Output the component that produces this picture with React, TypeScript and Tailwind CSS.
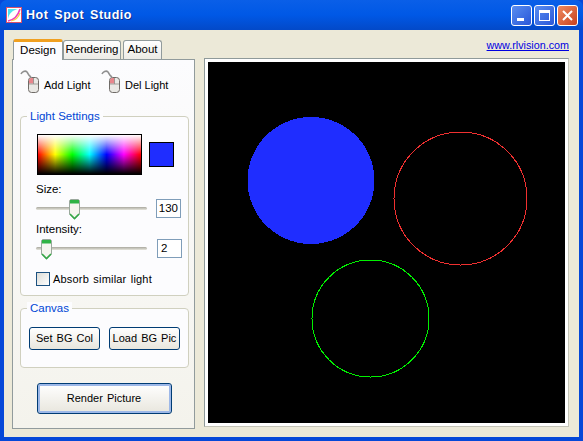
function MouseIcon() {
  return (
    <svg width="20" height="23" viewBox="0 0 20 23" className="shrink-0">
      <path d="M1 4 C2 2 5 0 7 2 C8 3 8 5 11 7" fill="none" stroke="#8f8f8f" strokeWidth="1.6" />
      <rect x="8.5" y="7.5" width="10" height="15" rx="3" fill="#e9e8e4" stroke="#6f6b67" />
      <path d="M9 13 V10 C9 9 10 8 11.5 8 H13.5 V13.5 H9 Z" fill="#e8868c" />
      <path d="M9 14 H18 M13.5 8 V14" stroke="#8f8d89" strokeWidth="0.8" fill="none" />
    </svg>
  );
}

function SliderThumb() {
  return (
    <svg width="11" height="21" viewBox="0 0 11 21">
      <path d="M1.5 .5 H9.5 L10.5 1.5 V15 L5.5 20 L.5 15 V1.5 Z" fill="#f6f5ef" stroke="#9aa89d" />
      <path d="M1 1 H10 V4.5 H1 Z" fill="#2fb344" />
      <path d="M1 15 L5.5 19.5 L10 15" fill="none" stroke="#35a746" strokeWidth="1.6" />
    </svg>
  );
}

function Slider({ thumbLeft }: { thumbLeft: string }) {
  return (
    <div className="relative h-[21px] w-[111px]">
      <div className="mt-[8px] h-[3px] w-full rounded-sm bg-gradient-to-b from-[#a9a89f] to-[#e6e5dc]" />
      <div className={`absolute top-0 ${thumbLeft}`}>
        <SliderThumb />
      </div>
    </div>
  );
}

function GroupBox({ title, className, children }: { title: string; className: string; children: React.ReactNode }) {
  return (
    <div className={`relative rounded-[4px] border border-[#d0d0bf] bg-[#fcfcfe] ${className}`}>
      <span className="absolute -top-[7px] left-[6px] bg-[#fcfcfe] px-[3px] text-[11.5px] leading-[13px] text-[#0046d5]">
        {title}
      </span>
      {children}
    </div>
  );
}

function XpButton({ label, className }: { label: string; className: string }) {
  return (
    <button className={`rounded-[3px] border border-[#003c74] bg-gradient-to-b from-white to-[#e8e6dd] text-[11px] text-black [word-spacing:1px] ${className}`}>
      {label}
    </button>
  );
}

export default function App() {
  return (
    <div className="flex h-[441px] w-[583px] flex-col overflow-hidden bg-[#0648d8] font-['Liberation_Sans',sans-serif]">
      {/* Title bar */}
      <div className="flex h-[30px] shrink-0 items-center rounded-t-[7px] bg-gradient-to-b from-[#0a5fe8] via-[#0058e6] to-[#0349c8] pl-[6px] pr-[5px]">
        <svg width="16" height="16" viewBox="0 0 16 16" className="shrink-0">
          <rect x=".5" y=".5" width="15" height="15" fill="#fff" stroke="#d8506a" />
          <path d="M2 12 C3 6 7 3 12 2 H2 Z" fill="#4fe6ee" />
          <path d="M2 14 C8 13 12 9 14 2" fill="none" stroke="#f040b8" strokeWidth="1.6" />
          <path d="M5 14 C10 13 13 9 14 6" fill="none" stroke="#f8d040" strokeWidth="1.2" />
        </svg>
        <span className="ml-[4px] text-[12.5px] font-bold tracking-[0.5px] text-white [text-shadow:1px_1px_0_#0f2f90] [word-spacing:2px]">
          Hot Spot Studio
        </span>
        <div className="ml-auto flex gap-[2px]">
          <div className="flex h-[21px] w-[21px] items-end rounded-[3px] border border-white bg-gradient-to-br from-[#5a8df0] to-[#2a56d8] pb-[4px] pl-[5px]">
            <div className="h-[3px] w-[7px] bg-white" />
          </div>
          <div className="flex h-[21px] w-[21px] items-center justify-center rounded-[3px] border border-white bg-gradient-to-br from-[#5a8df0] to-[#2a56d8]">
            <div className="h-[11px] w-[11px] border border-t-[3px] border-white" />
          </div>
          <div className="flex h-[21px] w-[21px] items-center justify-center rounded-[3px] border border-white bg-gradient-to-br from-[#ee8a60] to-[#c8401c]">
            <svg width="11" height="11" viewBox="0 0 11 11">
              <path d="M1 1 L10 10 M10 1 L1 10" stroke="#fff" strokeWidth="2" />
            </svg>
          </div>
        </div>
      </div>

      {/* Client area */}
      <div className="mx-[4px] mb-[4px] flex min-h-0 flex-1 bg-[#ece9d8] pl-[8px] pr-[10px]">
        {/* Left tabs */}
        <div className="flex w-[183px] shrink-0 flex-col pt-[8px]">
          <div className="relative z-10 flex h-[21px] items-end pl-[1px] text-[11.5px] text-black">
            <div className="-mb-px flex h-[21px] w-[50px] items-center justify-center rounded-t-[3px] border-x border-[#919b9c] border-t-[3px] border-t-[#f0a020] bg-[#fcfcfe]">
              Design
            </div>
            <div className="flex h-[19px] w-[58px] items-center justify-center rounded-t-[3px] border border-b-0 border-[#919b9c] bg-gradient-to-b from-white to-[#ecebe5]">
              Rendering
            </div>
            <div className="ml-[2px] flex h-[19px] w-[39px] items-center justify-center rounded-t-[3px] border border-b-0 border-[#919b9c] bg-gradient-to-b from-white to-[#ecebe5]">
              About
            </div>
          </div>
          <div className="flex h-[370px] flex-col border border-[#919b9c] bg-gradient-to-b from-[#fcfcfe] to-[#f4f3ec] px-[7px] pt-[10px] text-[11.5px] text-black">
            <div className="flex h-[23px] items-end">
              <MouseIcon />
              <span className="ml-[4px] w-[46px] whitespace-nowrap text-[11px] leading-[16px]">Add Light</span>
              <div className="ml-[11px]">
                <MouseIcon />
              </div>
              <span className="ml-[4px] whitespace-nowrap text-[11px] leading-[16px]">Del Light</span>
            </div>

            <GroupBox title="Light Settings" className="mt-[23px] h-[180px] w-[169px] shrink-0 pl-[15px] pt-[17px]">
              <div className="ml-[1px] flex items-center">
                <div className="h-[41px] w-[105px] border border-black bg-[linear-gradient(to_bottom,#fff_0%,rgba(255,255,255,0)_50%,rgba(0,0,0,0)_50%,#000_100%),linear-gradient(to_right,#f00,#ff0,#0f0,#0ff,#00f,#f0f,#f00)]" />
                <div className="ml-[7px] h-[25px] w-[25px] border border-black bg-[#1f2dff]" />
              </div>
              <div className="mt-[8px] leading-[13px]">Size:</div>
              <div className="mt-[3px] flex items-start">
                <Slider thumbLeft="left-[33px]" />
                <div className="ml-[9px] flex h-[19px] w-[25px] items-center justify-end border border-[#7f9db9] bg-white pr-[2px]">130</div>
              </div>
              <div className="mt-[3px] leading-[13px]">Intensity:</div>
              <div className="mt-[3px] flex items-start">
                <Slider thumbLeft="left-[5px]" />
                <div className="ml-[10px] flex h-[19px] w-[25px] items-center border border-[#7f9db9] bg-white pl-[3px]">2</div>
              </div>
              <div className="mt-[12px] flex items-center">
                <div className="h-[14px] w-[14px] border border-[#1c5180] bg-gradient-to-br from-[#dcdcd7] to-white" />
                <span className="ml-[3px] text-[11px] leading-[14px] tracking-[0.2px] [word-spacing:1px]">Absorb similar light</span>
              </div>
            </GroupBox>

            <GroupBox title="Canvas" className="mt-[12px] flex h-[60px] w-[169px] shrink-0 items-start gap-[9px] pl-[8px] pt-[18px]">
              <XpButton label="Set BG Col" className="h-[23px] w-[71px]" />
              <XpButton label="Load BG Pic" className="h-[23px] w-[71px]" />
            </GroupBox>

            <div className="mt-[15px] flex justify-center pl-[1px]">
              <XpButton label="Render Picture" className="h-[31px] w-[135px] shadow-[inset_0_0_0_2px_#9db8e8]" />
            </div>
          </div>
        </div>

        {/* Canvas */}
        <div className="ml-[9px] flex flex-1 flex-col">
          <div className="flex h-[28px] items-center justify-end pt-[2px]">
            <a className="text-[10.75px] leading-[13px] text-[#0000e0] underline">www.rlvision.com</a>
          </div>
          <div className="h-[369px] border border-t-[#8f9a9a] border-l-[#8f9a9a] border-r-[#c4c4b8] border-b-[#c4c4b8] bg-white p-[3px]">
            <svg width="357" height="361" viewBox="0 0 357 361" shapeRendering="crispEdges" className="block bg-black">
              <circle cx="103" cy="118.5" r="63.5" fill="#1f2dff" />
              <circle cx="252.5" cy="136.5" r="66.5" fill="none" stroke="#f03030" />
              <circle cx="162.5" cy="256.5" r="58.5" fill="none" stroke="#00f000" />
            </svg>
          </div>
        </div>
      </div>
    </div>
  );
}
